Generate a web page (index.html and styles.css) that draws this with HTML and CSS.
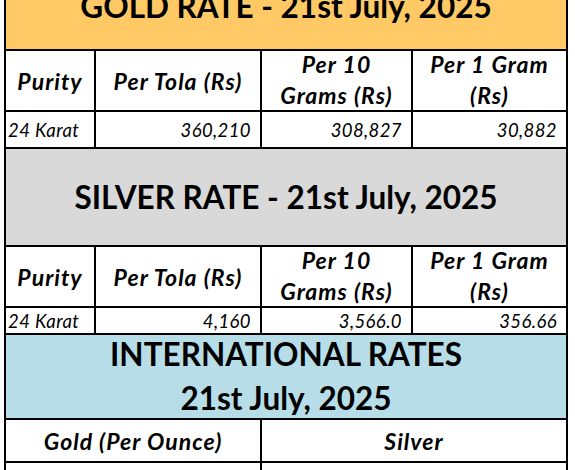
FILE: index.html
```html
<!DOCTYPE html>
<html>
<head>
<meta charset="utf-8">
<link rel="stylesheet" href="styles.css">
</head>
<body>
<div class="sheet">
<table class="rates">
  <colgroup>
    <col class="c1"><col class="c2"><col class="c3"><col class="c4">
  </colgroup>
  <tr class="title-row gold-title">
    <td colspan="4" class="title gold">GOLD RATE - 21st July, 2025</td>
  </tr>
  <tr class="head-row">
    <td class="head">Purity</td>
    <td class="head">Per Tola (Rs)</td>
    <td class="head"><div class="two">Per 10<br>Grams (Rs)</div></td>
    <td class="head"><div class="two">Per 1 Gram<br>(Rs)</div></td>
  </tr>
  <tr class="data-row tall">
    <td class="label">24 Karat</td>
    <td class="num">360,210</td>
    <td class="num">308,827</td>
    <td class="num">30,882</td>
  </tr>
  <tr class="title-row silver-title">
    <td colspan="4" class="title silver">SILVER RATE - 21st July, 2025</td>
  </tr>
  <tr class="head-row">
    <td class="head">Purity</td>
    <td class="head">Per Tola (Rs)</td>
    <td class="head"><div class="two">Per 10<br>Grams (Rs)</div></td>
    <td class="head"><div class="two">Per 1 Gram<br>(Rs)</div></td>
  </tr>
  <tr class="data-row short">
    <td class="label">24 Karat</td>
    <td class="num">4,160</td>
    <td class="num">3,566.0</td>
    <td class="num">356.66</td>
  </tr>
  <tr class="title-row intl-title">
    <td colspan="4" class="title intl"><div class="two-big">INTERNATIONAL RATES<br>21st July, 2025</div></td>
  </tr>
  <tr class="sub-row">
    <td colspan="2" class="head">Gold (Per Ounce)</td>
    <td colspan="2" class="head">Silver</td>
  </tr>
  <tr class="last-row">
    <td colspan="2"></td>
    <td colspan="2"></td>
  </tr>
</table>
</div>
</body>
</html>
```

FILE: styles.css
```css
html, body {
  margin: 0;
  padding: 0;
  background: #ffffff;
}

body {
  font-family: Lato, "Liberation Sans", sans-serif;
  color: #000;
  overflow: hidden;
}

.sheet {
  margin-top: -39px;
  padding-left: 4px;
}

.rates {
  border-collapse: collapse;
  table-layout: fixed;
  width: 562px;
}

.c1 { width: 90px; }
.c2 { width: 166px; }
.c3 { width: 151px; }
.c4 { width: 155px; }

.rates td {
  border: 2px solid #000;
  padding: 0;
  vertical-align: middle;
  overflow: hidden;
  white-space: nowrap;
}

.title {
  text-align: center;
  font-weight: 700;
  font-size: 31.5px;
}

.gold { background: #ffca66; }
.silver { background: #d9d9d9; }
.intl { background: #b7dee8; }

.two-big {
  line-height: 44px;
  margin: -3px 0 -2px;
}

.gold-title td { height: 86px; }
.silver-title td { height: 96px; }
.intl-title td { height: 83px; }

.head {
  text-align: center;
  font-weight: 700;
  font-style: italic;
  font-size: 23px;
  letter-spacing: 1px;
  line-height: 28px;
}

.two {
  line-height: 31px;
  margin: -2px 0 -1px;
}

.head-row td { height: 59px; }
.sub-row td { height: 41px; }
.last-row td { height: 30px; }

.data-row td {
  font-style: italic;
  font-size: 18.5px;
  letter-spacing: 0.4px;
  line-height: 22px;
}

.tall td { height: 35px; }
.short td { height: 25px; }

.label {
  text-align: left;
  padding-left: 2px !important;
}

.num {
  text-align: right;
  padding-right: 9px !important;
}
```
